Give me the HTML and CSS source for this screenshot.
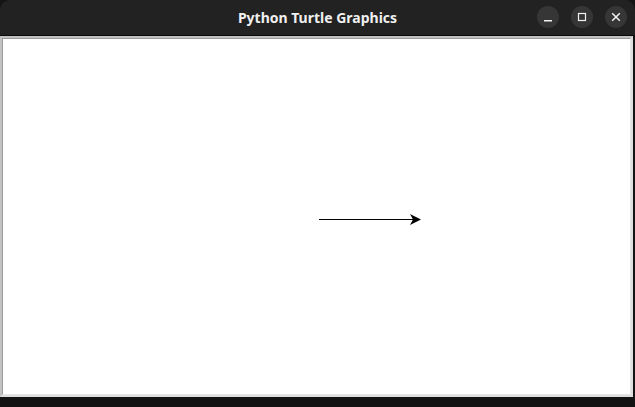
FILE: index.html
```html
<!DOCTYPE html>
<html lang="en">
<head>
    <meta charset="UTF-8">
    <title>Python Turtle Graphics</title>
    <link rel="stylesheet" href="styles.css">
</head>
<body>
    <div class="window">
        <div class="titlebar">
            <span class="title">Python Turtle Graphics</span>
            <div class="controls">
                <span class="btn">
                    <svg width="22" height="22" viewBox="0 0 22 22"><rect x="7" y="14" width="8" height="1.5" fill="#f2f2f2"/></svg>
                </span>
                <span class="btn">
                    <svg width="22" height="22" viewBox="0 0 22 22"><rect x="7.5" y="7.5" width="7" height="7" fill="none" stroke="#f2f2f2" stroke-width="1.2"/></svg>
                </span>
                <span class="btn">
                    <svg width="22" height="22" viewBox="0 0 22 22"><path d="M7.2 7.2 L14.8 14.8 M14.8 7.2 L7.2 14.8" stroke="#f2f2f2" stroke-width="1.5"/></svg>
                </span>
            </div>
        </div>
        <div class="divider"></div>
        <div class="frame">
            <div class="sunken">
                <svg class="canvas" viewBox="0 0 627 355" width="627" height="355">
                    <line x1="316" y1="180.5" x2="411" y2="180.5" stroke="#000" stroke-width="1"/>
                    <polygon points="418,180.5 407,175 410,180.5 407,186" fill="#000"/>
                </svg>
            </div>
        </div>
        <div class="bottom"></div>
    </div>
</body>
</html>
```

FILE: styles.css
```css
html, body {
    margin: 0;
    padding: 0;
    background-color: #141414;
}
.window {
    width: 635px;
    height: 407px;
    display: flex;
    flex-direction: column;
    font-family: "Noto Sans", "DejaVu Sans", sans-serif;
}
.titlebar {
    height: 35px;
    flex: none;
    background-color: #222222;
    border-radius: 10px 10px 0 0;
    display: flex;
    align-items: center;
    justify-content: center;
    position: relative;
}
.title {
    color: #f0f0f0;
    font-weight: bold;
    font-size: 14px;
    letter-spacing: 0;
}
.controls {
    position: absolute;
    right: 8px;
    top: 6px;
    display: flex;
    gap: 12px;
}
.btn {
    width: 22px;
    height: 22px;
    border-radius: 50%;
    background-color: #363636;
    display: block;
}
.btn svg {
    display: block;
}
.divider {
    height: 1px;
    flex: none;
    background-color: #0c0c0c;
}
.frame {
    width: 633px;
    height: 361px;
    flex: none;
    box-sizing: border-box;
    border-style: solid;
    border-width: 2px;
    border-color: #c2c2c2 #dedede #dedede #c2c2c2;
}
.sunken {
    height: 100%;
    box-sizing: border-box;
    border-style: solid;
    border-width: 1px;
    border-color: #9c9c9c #e6e6e6 #e6e6e6 #9c9c9c;
    background-color: #ffffff;
}
.canvas {
    display: block;
}
.bottom {
    flex: 1;
    background-color: #121212;
}
```
